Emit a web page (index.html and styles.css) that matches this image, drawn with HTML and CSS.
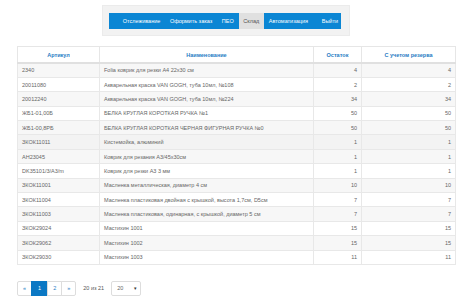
FILE: index.html
```html
<!DOCTYPE HTML>
<html>
<head>
<meta charset="utf-8">
<link rel="stylesheet" href="styles.css">
</head>
<body>

<div class="page">
  <div class="menu-wrap">
    <ul class="menu">
      <li class="menu-item">Отслеживание</li>
      <li class="menu-item">Оформить заказ</li>
      <li class="menu-item">ПЕО</li>
      <li class="menu-item menu-item-active">Склад</li>
      <li class="menu-item">Автоматизация</li>
      <li class="menu-item">Выйти</li>
    </ul>
  </div>

  <table class="grid">
    <thead>
      <tr>
        <th class="col-art">Артикул</th>
        <th class="col-name">Наименование</th>
        <th class="col-qty">Остаток</th>
        <th class="col-res">С учетом резерва</th>
      </tr>
    </thead>
    <tbody>
      <tr><td>2340</td><td>Folia коврик для резки А4 22x30 см</td><td class="num">4</td><td class="num">4</td></tr>
      <tr><td>20011080</td><td>Акварельная краска VAN GOGH, туба 10мл, №108</td><td class="num">2</td><td class="num">2</td></tr>
      <tr><td>20012240</td><td>Акварельная краска VAN GOGH, туба 10мл, №224</td><td class="num">34</td><td class="num">34</td></tr>
      <tr><td>ЖБ1-01,00Б</td><td>БЕЛКА КРУГЛАЯ КОРОТКАЯ РУЧКА №1</td><td class="num">50</td><td class="num">50</td></tr>
      <tr><td>ЖБ1-00,8РБ</td><td>БЕЛКА КРУГЛАЯ КОРОТКАЯ ЧЕРНАЯ ФИГУРНАЯ РУЧКА №0</td><td class="num">50</td><td class="num">50</td></tr>
      <tr class="hover"><td>ЗКОК11011</td><td>Кистемойка, алюминий</td><td class="num">1</td><td class="num">1</td></tr>
      <tr><td>АН23045</td><td>Коврик для резания А3/45x30см</td><td class="num">1</td><td class="num">1</td></tr>
      <tr><td>DK35101/3/A3/m</td><td>Коврик для резки А3 3 мм</td><td class="num">1</td><td class="num">1</td></tr>
      <tr><td>ЗКОК11001</td><td>Масленка металлическая, диаметр 4 см</td><td class="num">10</td><td class="num">10</td></tr>
      <tr><td>ЗКОК11004</td><td>Масленка пластиковая двойная с крышкой, высота 1,7см, D5см</td><td class="num">7</td><td class="num">7</td></tr>
      <tr><td>ЗКОК11003</td><td>Масленка пластиковая, одинарная, с крышкой, диаметр 5 см</td><td class="num">7</td><td class="num">7</td></tr>
      <tr><td>ЗКОК29024</td><td>Мастихин 1001</td><td class="num">15</td><td class="num">15</td></tr>
      <tr><td>ЗКОК29062</td><td>Мастихин 1002</td><td class="num">15</td><td class="num">15</td></tr>
      <tr><td>ЗКОК29030</td><td>Мастихин 1003</td><td class="num">11</td><td class="num">11</td></tr>
    </tbody>
  </table>

  <div class="pager">
    <ul class="pages">
      <li class="page-link">«</li>
      <li class="page-link page-link-active">1</li>
      <li class="page-link">2</li>
      <li class="page-link">»</li>
    </ul>
    <span class="pager-info">20 из 21</span>
    <div class="page-size">20<span class="caret">▾</span></div>
  </div>
</div>

</body>
</html>
```

FILE: styles.css
```css
body {
  margin: 0;
  background-color: #fff;
  font-family: "Liberation Sans", Arial, sans-serif;
  color: #666;
}

.page {
  padding: 5px 23px 0 17px;
}

/* top menu */
.menu-wrap {
  display: inline-block;
  margin-left: 85px;
  padding: 7px 8px 6px 6px;
  background-color: #f2f2f2;
  border: 1px solid #ebebeb;
}

.menu {
  display: flex;
  margin: 0;
  padding: 0 0 0 9px;
  list-style: none;
  background-color: #0b86d4;
}

.menu-item {
  padding: 0 4.8px;
  height: 16px;
  line-height: 16px;
  font-size: 5.5px;
  color: #fff;
  white-space: nowrap;
}

.menu-item:last-child {
  padding-left: 9px;
  padding-right: 3px;
}

.menu-item-active {
  background-color: #e0e0e0;
  color: #555;
}

/* table */
.grid {
  width: 434px;
  margin-top: 10px;
  border-collapse: collapse;
  font-size: 5.5px;
  table-layout: fixed;
}

.grid th {
  height: 15px;
  padding: 0 4px;
  color: #1f7cc4;
  font-weight: bold;
  text-align: center;
  border: 1px solid #e6e6e6;
  border-bottom: 2px solid #e0e0e0;
}

.col-art { width: 73px; }
.col-name { width: 205px; }
.col-qty { width: 39px; }
.col-res { width: 85px; }

.grid td {
  height: 14.4px;
  padding: 0 4px;
  border: 1px solid #e8e8e8;
  white-space: nowrap;
  overflow: hidden;
  box-sizing: border-box;
}

.grid tbody tr:nth-child(odd) {
  background-color: #f7f7f7;
}

.grid tbody tr.hover {
  background-color: #f3f3f3;
}

.grid td.num {
  text-align: right;
}

/* pager */
.pager {
  display: flex;
  align-items: center;
  margin-top: 16px;
}

.pages {
  display: flex;
  margin: 0;
  padding: 0;
  list-style: none;
}

.page-link {
  height: 13px;
  line-height: 13px;
  padding: 0 5px;
  font-size: 5.5px;
  color: #1f7cc4;
  border: 1px solid #ddd;
  margin-left: -1px;
  background-color: #fff;
}

.page-link:first-child {
  margin-left: 0;
  border-radius: 2px 0 0 2px;
}

.page-link:last-child {
  border-radius: 0 2px 2px 0;
}

.page-link-active {
  padding: 0 6px;
  background-color: #0b78c4;
  border-color: #0b78c4;
  color: #fff;
}

.pager-info {
  margin-left: 7px;
  font-size: 5.5px;
  color: #555;
}

.page-size {
  display: flex;
  justify-content: space-between;
  width: 20px;
  height: 13px;
  line-height: 13px;
  margin-left: 7px;
  padding: 0 3px 0 5px;
  font-size: 5.5px;
  border: 1px solid #ddd;
  border-radius: 2px;
}

.caret {
  font-size: 5px;
  color: #333;
}
```
